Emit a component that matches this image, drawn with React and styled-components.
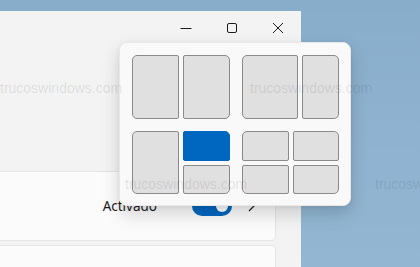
import React from 'react';
import styled, { createGlobalStyle } from 'styled-components';

const GlobalStyle = createGlobalStyle`
  html, body {
    margin: 0;
    padding: 0;
    width: 420px;
    height: 267px;
    overflow: hidden;
  }
  body {
    background: linear-gradient(180deg, #88adcb 0%, #8fb3d0 60%, #93b7d2 100%);
    font-family: "Segoe UI", "Noto Sans", "Liberation Sans", sans-serif;
  }
`;

const StyledPage = styled.div`
  position: relative;
  width: 420px;
  height: 267px;
  padding-top: 11px;
  box-sizing: border-box;
  overflow: hidden;
`;

const StyledWindow = styled.div`
  width: 301px;
  height: 256px;
  background: #f3f3f3;
  display: flex;
  flex-direction: column;
`;

const StyledTitleBar = styled.div`
  height: 33px;
  display: flex;
  justify-content: flex-end;
`;

const StyledCaptionButton = styled.div`
  width: 46px;
  height: 33px;
  display: flex;
  align-items: center;
  justify-content: center;
  color: #1b1b1b;
`;

const StyledContent = styled.div`
  padding-top: 127px;
  display: flex;
  flex-direction: column;
  gap: 4px;
`;

const StyledCard = styled.div`
  height: ${(p) => p.height}px;
  margin: 0 25px 0 -10px;
  box-sizing: border-box;
  background: #fbfbfb;
  border: 1px solid #e5e5e5;
  border-radius: 4px;
  display: flex;
  align-items: center;
  justify-content: flex-end;
  padding-right: 20px;
`;

const StyledLabel = styled.span`
  font-size: 13.5px;
  color: #1a1a1a;
  margin-right: 35px;
`;

const StyledToggle = styled.div`
  width: 40px;
  height: 20px;
  border-radius: 10px;
  background: #0067c0;
  display: flex;
  align-items: center;
  justify-content: flex-end;
  padding-right: 4px;
  box-sizing: border-box;

  &::after {
    content: '';
    width: 12px;
    height: 12px;
    border-radius: 50%;
    background: #ffffff;
  }
`;

const StyledChevron = styled.svg`
  margin-left: 15px;
`;

const StyledFlyout = styled.div`
  position: absolute;
  left: 119px;
  top: 42px;
  width: 232px;
  height: 164px;
  box-sizing: border-box;
  padding: 12px;
  background: #f9f9f9;
  border: 1px solid #e8e8e8;
  border-radius: 8px;
  box-shadow: 0 8px 18px rgba(0, 0, 0, 0.16), 0 1px 4px rgba(0, 0, 0, 0.06);
  display: grid;
  grid-template-columns: 98px 97px;
  grid-template-rows: 64px 63px;
  gap: 12px;
`;

const StyledGroup = styled.div`
  display: grid;
  grid-template-columns: ${(p) => p.cols};
  grid-template-rows: ${(p) => p.rows || '1fr'};
  gap: 4px 4px;
`;

const StyledCell = styled.div`
  box-sizing: border-box;
  background: ${(p) => (p.active ? '#0067c0' : '#e0e0e0')};
  border: 1px solid ${(p) => (p.active ? '#0067c0' : '#8a8a8a')};
  border-radius: ${(p) => p.corners};
  grid-row: ${(p) => p.span || 'auto'};
`;

const StyledWatermark = styled.span`
  position: absolute;
  left: ${(p) => p.x}px;
  top: ${(p) => p.y}px;
  font-family: "Liberation Sans", Arial, sans-serif;
  font-size: 14px;
  color: rgba(40, 40, 40, 0.12);
  white-space: nowrap;
  pointer-events: none;
`;

const R = 5;
const r = 2;
const c = (a, b, d, e) => `${a}px ${b}px ${d}px ${e}px`;

const App = () => {
  return (
    <>
      <GlobalStyle />
      <StyledPage>
        <StyledWindow>
          <StyledTitleBar>
            <StyledCaptionButton>
              <svg width="12" height="12" viewBox="0 0 12 12">
                <path d="M0.5 6.5h11" stroke="currentColor" strokeWidth="1" />
              </svg>
            </StyledCaptionButton>
            <StyledCaptionButton>
              <svg width="12" height="12" viewBox="0 0 12 12">
                <rect x="1.5" y="1.5" width="9" height="9" rx="1.5" fill="none" stroke="currentColor" strokeWidth="1" />
              </svg>
            </StyledCaptionButton>
            <StyledCaptionButton>
              <svg width="12" height="12" viewBox="0 0 12 12">
                <path d="M1 1l10 10M11 1L1 11" stroke="currentColor" strokeWidth="1" />
              </svg>
            </StyledCaptionButton>
          </StyledTitleBar>

          <StyledContent>
            <StyledCard height={70}>
              <StyledLabel>Activado</StyledLabel>
              <StyledToggle />
              <StyledChevron width="8" height="12" viewBox="0 0 8 12">
                <path d="M2 1l5 5-5 5" fill="none" stroke="#1a1a1a" strokeWidth="1.2" />
              </StyledChevron>
            </StyledCard>
            <StyledCard height={40} />
          </StyledContent>
        </StyledWindow>

        <StyledFlyout>
          <StyledGroup cols="1fr 1fr">
            <StyledCell corners={c(R, r, r, R)} />
            <StyledCell corners={c(r, R, R, r)} />
          </StyledGroup>
          <StyledGroup cols="56px 1fr">
            <StyledCell corners={c(R, r, r, R)} />
            <StyledCell corners={c(r, R, R, r)} />
          </StyledGroup>
          <StyledGroup cols="1fr 1fr" rows="1fr 1fr">
            <StyledCell span="1 / 3" corners={c(R, r, r, R)} />
            <StyledCell active corners={c(r, R, r, r)} />
            <StyledCell corners={c(r, r, R, r)} />
          </StyledGroup>
          <StyledGroup cols="1fr 1fr" rows="1fr 1fr">
            <StyledCell corners={c(R, r, r, r)} />
            <StyledCell corners={c(r, R, r, r)} />
            <StyledCell corners={c(r, r, r, R)} />
            <StyledCell corners={c(r, r, R, r)} />
          </StyledGroup>
        </StyledFlyout>

        <StyledWatermark x={0} y={80}>trucoswindows.com</StyledWatermark>
        <StyledWatermark x={250} y={80}>trucoswindows.com</StyledWatermark>
        <StyledWatermark x={125} y={176}>trucoswindows.com</StyledWatermark>
        <StyledWatermark x={375} y={176}>trucoswindows.com</StyledWatermark>
      </StyledPage>
    </>
  );
};

export default App;
